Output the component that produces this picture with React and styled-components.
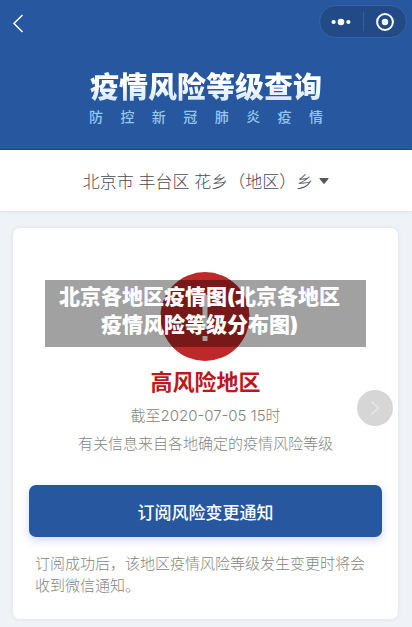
import React from 'react';
import styled, { createGlobalStyle } from 'styled-components';

const App = () => (
  <>
    <GlobalStyle />
    <Page>
      <Header>
        <NavBar>
          <IconButton type="button" aria-label="返回">
            <svg width="12" height="20" viewBox="0 0 12 20" fill="none" stroke="#fff" strokeWidth="1.5">
              <path d="M10.5 2 L2 10.5 L10.5 19" />
            </svg>
          </IconButton>
          <Capsule>
            <CapsuleButton type="button" aria-label="更多">
              <svg width="20" height="8" viewBox="0 0 20 8" fill="#fff">
                <circle cx="2.6" cy="4" r="2.1" />
                <circle cx="10" cy="4" r="3.3" />
                <circle cx="17.4" cy="4" r="2.1" />
              </svg>
            </CapsuleButton>
            <Divider />
            <CapsuleButton type="button" aria-label="关闭">
              <svg width="20" height="20" viewBox="0 0 20 20">
                <circle cx="10" cy="10" r="7.9" fill="none" stroke="#fff" strokeWidth="2" />
                <circle cx="10" cy="10" r="3.2" fill="#fff" />
              </svg>
            </CapsuleButton>
          </Capsule>
        </NavBar>
        <Banner>
          <Title>疫情风险等级查询</Title>
          <Subtitle>防控新冠肺炎疫情</Subtitle>
        </Banner>
      </Header>

      <RegionButton type="button">
        北京市 丰台区 花乡（地区）乡
        <svg width="10" height="6" viewBox="0 0 10 6" fill="#555863">
          <path d="M0.8 0 H9.2 Q10 0.4 9.4 1 L5.6 5.6 Q5 6.2 4.4 5.6 L0.6 1 Q0 0.4 0.8 0 Z" />
        </svg>
      </RegionButton>

      <Card>
        <Hero>
          <svg width="90" height="90" viewBox="0 0 90 90">
            <circle cx="44" cy="44.5" r="44.5" fill="#bf2828" />
            <path d="M41.5 23 H46.5 V57 H41.5 Z M41.5 64 H46.5 V69 H41.5 Z" fill="#fff" />
          </svg>
          <Caption>
            北京各地区疫情图(北京各地区
            <br />
            疫情风险等级分布图)
          </Caption>
        </Hero>
        <Level>高风险地区</Level>
        <Info>截至2020-07-05 15时</Info>
        <Info>有关信息来自各地确定的疫情风险等级</Info>
        <SubscribeButton type="button">订阅风险变更通知</SubscribeButton>
        <Note>订阅成功后，该地区疫情风险等级发生变更时将会收到微信通知。</Note>
        <NextButton type="button" aria-label="下一个">
          <svg width="10" height="16" viewBox="0 0 10 16" fill="none" stroke="#ececec" strokeWidth="1.1">
            <path d="M1.5 1.5 L8.5 8 L1.5 14.5" />
          </svg>
        </NextButton>
      </Card>
    </Page>
  </>
);

// Style
const GlobalStyle = createGlobalStyle`
  * {
    box-sizing: border-box;
  }

  body {
    margin: 0;
    background: #eff3f7;
    font-family: Inter, "Noto Sans CJK SC", sans-serif;
  }

  button {
    margin: 0;
    padding: 0;
    border: 0;
    background: none;
    color: inherit;
    font: inherit;
    cursor: pointer;
  }

  svg {
    display: block;
    overflow: visible;
  }
`;

const Page = styled.main`
  padding-bottom: 8px;
`;

const Header = styled.header`
  height: 150px;
  background: #27579e;
  border-bottom: 1px solid #1b4a92;
`;

const NavBar = styled.nav`
  display: flex;
  align-items: flex-start;
  justify-content: space-between;
  padding: 5px 5px 0 12px;
`;

const IconButton = styled.button`
  padding: 8px 0;
`;

const Capsule = styled.div`
  display: flex;
  align-items: center;
  width: 88px;
  height: 33px;
  border: 1px solid #3a639f;
  border-radius: 17px;
  background: #224a86;
`;

const CapsuleButton = styled.button`
  display: flex;
  flex: 1;
  align-items: center;
  justify-content: center;
  height: 100%;
`;

const Divider = styled.span`
  width: 1px;
  height: 19px;
  background: #3a5f98;
`;

const Banner = styled.div`
  width: 234px;
  margin: 28px auto 0;
`;

const Title = styled.h1`
  margin: 0;
  background: linear-gradient(#fff 40%, #cfe3fc 90%);
  background-clip: text;
  color: transparent;
  font-size: 29px;
  font-weight: 900;
  line-height: 38px;
  text-align: center;
`;

const Subtitle = styled.p`
  margin: 0;
  color: #93c8f5;
  font-size: 14px;
  font-weight: 500;
  line-height: 20px;
  text-align: justify;
  text-align-last: justify;
`;

const RegionButton = styled.button`
  display: flex;
  align-items: center;
  justify-content: center;
  gap: 6px;
  width: 100%;
  height: 61px;
  background: #fff;
  box-shadow: 0 1px 3px rgba(40, 60, 80, 0.1);
  color: #484b57;
  font-size: 17px;
  font-weight: 300;
`;

const Card = styled.section`
  position: relative;
  margin: 17px 14px 0 13px;
  padding: 44px 16px 22px;
  border-radius: 7px;
  background: #fff;
  box-shadow: 0 0 4px rgba(40, 60, 80, 0.1);
  text-align: center;
`;

const Hero = styled.div`
  position: relative;
  display: flex;
  justify-content: center;
`;

const Caption = styled.p`
  position: absolute;
  top: 8px;
  right: 16px;
  left: 16px;
  margin: 0;
  padding: 3px 12px 8px 0;
  background: rgba(0, 0, 0, 0.37);
  color: #fff;
  font-size: 21px;
  font-weight: 900;
  line-height: 28px;
  white-space: nowrap;
`;

const Level = styled.h2`
  margin: 4px 0 7px;
  color: #b91a1e;
  font-size: 22px;
  font-weight: 700;
  line-height: 32px;
`;

const Info = styled.p`
  margin: 0 0 6px;
  color: #85867e;
  font-size: 15px;
  font-weight: 300;
  line-height: 22px;
`;

const SubscribeButton = styled.button`
  width: 100%;
  height: 52px;
  margin-top: 24px;
  border-radius: 7px;
  background: #27579e;
  box-shadow: 0 3px 8px rgba(60, 90, 230, 0.25);
  color: #fff;
  font-size: 17px;
  font-weight: 500;
`;

const Note = styled.p`
  margin: 16px 6px 0;
  color: #85867e;
  font-size: 15px;
  font-weight: 300;
  line-height: 22px;
  text-align: left;
`;

const NextButton = styled.button`
  position: absolute;
  top: 162px;
  right: 5px;
  display: flex;
  align-items: center;
  justify-content: center;
  width: 36px;
  height: 36px;
  border-radius: 50%;
  background: #d6d6d6;
`;

export default App;
